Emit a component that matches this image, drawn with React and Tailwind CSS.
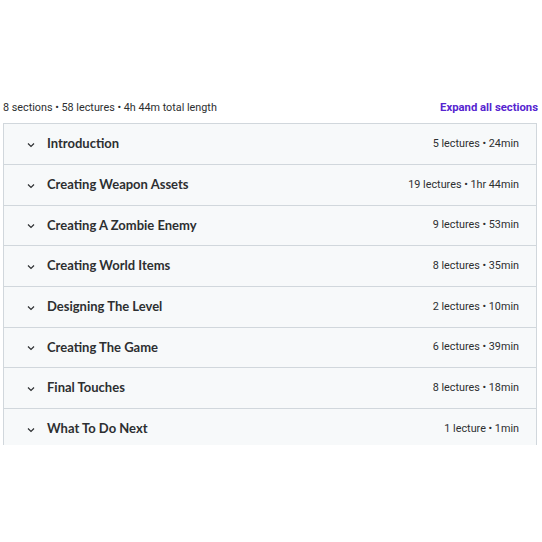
import React from "react";

const sections = [
  ["Introduction", "5 lectures • 24min"],
  ["Creating Weapon Assets", "19 lectures • 1hr 44min"],
  ["Creating A Zombie Enemy", "9 lectures • 53min"],
  ["Creating World Items", "8 lectures • 35min"],
  ["Designing The Level", "2 lectures • 10min"],
  ["Creating The Game", "6 lectures • 39min"],
  ["Final Touches", "8 lectures • 18min"],
  ["What To Do Next", "1 lecture • 1min"],
];

function Chevron() {
  return (
    <svg width="10" height="10" viewBox="0 0 10 10" fill="none" className="shrink-0 mt-[2px]">
      <path d="M2 3.5 L5 6.5 L8 3.5" stroke="#2d2f31" strokeWidth="1.2" />
    </svg>
  );
}

export default function App() {
  return (
    <div className="w-[542px] h-[542px] bg-white pt-[101px] pl-[3px] pr-[5px] text-[#2d2f31]" style={{ fontFamily: "Roboto, 'Liberation Sans', sans-serif" }}>
      <div className="flex items-center justify-between h-[14px] -mr-[1px]">
        <span className="text-[10.8px] leading-none">8 sections • 58 lectures • 4h 44m total length</span>
        <span className="text-[11.3px] leading-none font-bold text-[#5624d0]">Expand all sections</span>
      </div>
      <div className="mt-[8px] h-[322px] overflow-hidden border-x border-t border-[#d1d7dc] bg-[#f7f9fa]">
        {sections.map(([t, m], i) => (
          <div key={i} className={`flex items-center ${i > 0 ? "h-[40.67px] border-t border-[#d1d7dc]" : "h-[40px]"} pl-[22px] pr-[17px]`}>
            <Chevron />
            <span className="ml-[11px] text-[13px] font-bold" style={{ fontFamily: "Lato, sans-serif" }}>{t}</span>
            <span className="ml-auto text-[10.8px]">{m}</span>
          </div>
        ))}
      </div>
    </div>
  );
}
